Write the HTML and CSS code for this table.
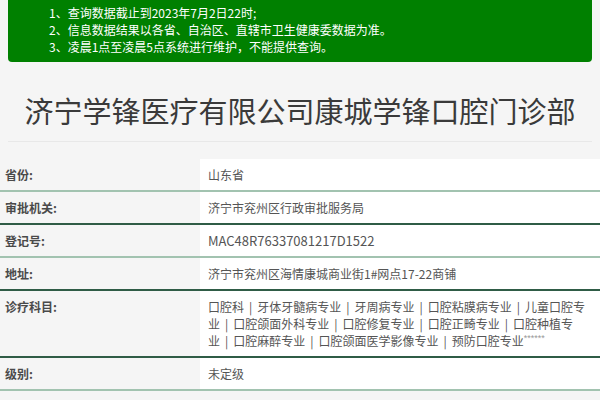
FILE: index.html
```html
<!DOCTYPE html>
<html lang="zh-CN">
<head>
<meta charset="utf-8">
<title>济宁学锋医疗有限公司康城学锋口腔门诊部</title>
<link rel="stylesheet" href="styles.css">
</head>
<body>
<div class="notice">
  <p>1、查询数据截止到2023年7月2日22时;</p>
  <p>2、信息数据结果以各省、自治区、直辖市卫生健康委数据为准。</p>
  <p>3、凌晨1点至凌晨5点系统进行维护，不能提供查询。</p>
</div>
<h1 class="title">济宁学锋医疗有限公司康城学锋口腔门诊部</h1>
<div class="rule"></div>
<table class="info">
  <tr class="light"><th>省份:</th><td>山东省</td></tr>
  <tr class="dark"><th>审批机关:</th><td>济宁市兖州区行政审批服务局</td></tr>
  <tr class="light"><th>登记号:</th><td class="code">MAC48R76337081217D1522</td></tr>
  <tr class="dark"><th>地址:</th><td>济宁市兖州区海情康城商业街1#网点17-22商铺</td></tr>
  <tr class="dark"><th>诊疗科目:</th><td>口腔科<span class="sep">|</span>牙体牙髓病专业<span class="sep">|</span>牙周病专业<span class="sep">|</span>口腔粘膜病专业<span class="sep">|</span>儿童口腔专业<span class="sep">|</span>口腔颌面外科专业<span class="sep">|</span>口腔修复专业<span class="sep">|</span>口腔正畸专业<span class="sep">|</span>口腔种植专业<span class="sep">|</span>口腔麻醉专业<span class="sep">|</span>口腔颌面医学影像专业<span class="sep">|</span>预防口腔专业<span class="mask">******</span></td></tr>
  <tr class="light"><th>级别:</th><td>未定级</td></tr>
</table>
</body>
</html>
```
FILE: styles.css
```css
html, body {
  margin: 0;
  padding: 0;
  background: #f5f5f5;
  font-family: "Noto Sans CJK SC", "Noto Sans", sans-serif;
  color: #333;
}

.notice {
  margin: 0 8px;
  padding: 4px 0 7px 41px;
  background: #008000;
  border-radius: 0 0 4px 4px;
  color: #fff;
  font-size: 12px;
  line-height: 17px;
}

.notice p {
  margin: 0;
}

.title {
  margin: 28px 0 0;
  font-size: 29px;
  line-height: 40px;
  font-weight: 400;
  text-align: center;
  color: #3a3a3a;
}

.rule {
  margin: 11px 8px 0;
  height: 1px;
  background: #e8e8e8;
}

.info {
  width: 100%;
  margin-top: 17px;
  border-collapse: collapse;
  font-size: 12px;
  line-height: 17px;
}

.info th {
  width: 195px;
  padding: 7px 0 7px 5px;
  text-align: left;
  vertical-align: top;
  font-weight: 700;
  color: #4a4a4a;
  background: #f5f5f5;
}

.info td {
  padding: 7px 8px 7px 8px;
  background: #fff;
  color: #555;
  vertical-align: top;
}

.info .code {
  font-size: 13px;
}

.info tr.light {
  border-bottom: 2px solid #a2c3b0;
}

.info tr.dark {
  border-bottom: 2px solid #2f5c46;
}

.sep {
  margin: 0 5px;
}

.mask {
  font-family: "Liberation Sans", sans-serif;
  font-size: 9px;
  vertical-align: top;
  line-height: 12px;
  color: #999;
}
```
